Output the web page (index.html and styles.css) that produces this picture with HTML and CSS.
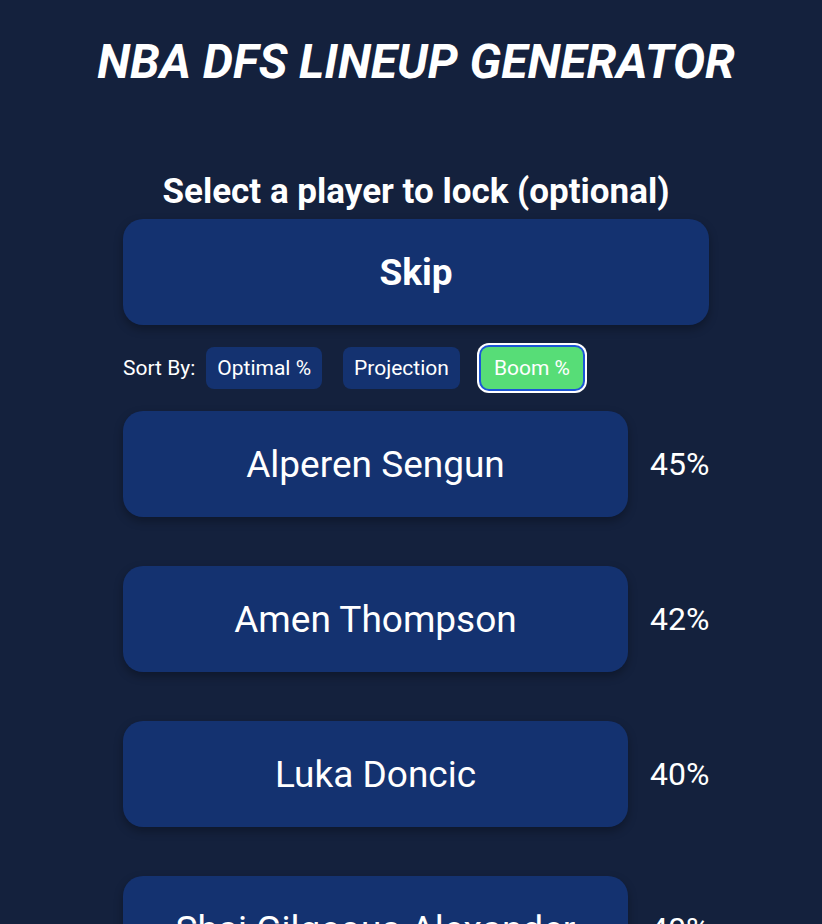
FILE: index.html
```html
<!DOCTYPE html>
<html lang="en">
<head>
    <meta charset="UTF-8">
    <meta name="viewport" content="width=device-width, initial-scale=1.0">
    <title>NBA DFS Lineup Generator</title>
    <link rel="stylesheet" href="styles.css">
</head>
<body>
    <div class="app">
        <h1 class="title">NBA DFS LINEUP GENERATOR</h1>

        <div class="lock-section">
            <h2 class="lock-heading">Select a player to lock (optional)</h2>
            <button class="big-btn skip-btn">Skip</button>

            <div class="sort-row">
                <span class="sort-label">Sort By:</span>
                <button class="sort-btn">Optimal %</button>
                <button class="sort-btn">Projection</button>
                <button class="sort-btn active">Boom %</button>
            </div>

            <div class="player-list">
                <div class="player-row">
                    <button class="big-btn player-btn">Alperen Sengun</button>
                    <span class="player-pct">45%</span>
                </div>
                <div class="player-row">
                    <button class="big-btn player-btn">Amen Thompson</button>
                    <span class="player-pct">42%</span>
                </div>
                <div class="player-row">
                    <button class="big-btn player-btn">Luka Doncic</button>
                    <span class="player-pct">40%</span>
                </div>
                <div class="player-row">
                    <button class="big-btn player-btn">Shai Gilgeous-Alexander</button>
                    <span class="player-pct">40%</span>
                </div>
            </div>
        </div>
    </div>
</body>
</html>
```

FILE: styles.css
```css
* {
    margin: 0;
    padding: 0;
    box-sizing: border-box;
    font-family: Roboto, "Liberation Sans", sans-serif;
}

body {
    background: #14213d;
    color: #fff;
    min-height: 100vh;
    overflow: hidden;
}

.app {
    width: 586px;
    margin: 0 auto;
    padding-left: 10px;
    box-sizing: content-box;
}

.title {
    font-size: 48px;
    font-weight: 700;
    font-style: italic;
    text-align: center;
    line-height: 54px;
    margin-top: 35px;
    white-space: nowrap;
    margin-left: -60px;
    margin-right: -60px;
}

.lock-section {
    margin-top: 82px;
}

.lock-heading {
    font-size: 35px;
    font-weight: 700;
    text-align: center;
    line-height: 41px;
    white-space: nowrap;
}

.big-btn {
    display: block;
    border: none;
    background: #143270;
    color: #fff;
    border-radius: 20px;
    height: 106px;
    font-size: 37px;
    box-shadow: 0 4px 10px rgba(0, 0, 0, 0.3);
    cursor: pointer;
    white-space: nowrap;
    overflow: hidden;
}

.skip-btn {
    width: 100%;
    margin-top: 7px;
    font-weight: 700;
}

.sort-row {
    display: flex;
    align-items: center;
    margin-top: 22px;
    height: 42px;
}

.sort-label {
    font-size: 21px;
    margin-right: 11px;
}

.sort-btn {
    border: none;
    background: #143270;
    color: #fff;
    font-size: 21px;
    height: 42px;
    padding: 0 11px;
    border-radius: 8px;
    margin-right: 21px;
    cursor: pointer;
}

.sort-btn.active {
    padding: 0 13px;
    background: #57dd77;
    box-shadow: 0 0 0 2px #1c56d6, 0 0 0 4px #fff;
}

.player-list {
    margin-top: 22px;
    display: flex;
    flex-direction: column;
    gap: 49px;
}

.player-row {
    display: flex;
    align-items: center;
    gap: 22px;
}

.player-btn {
    width: 505px;
    flex-shrink: 0;
}

.player-pct {
    font-size: 32px;
}
```
